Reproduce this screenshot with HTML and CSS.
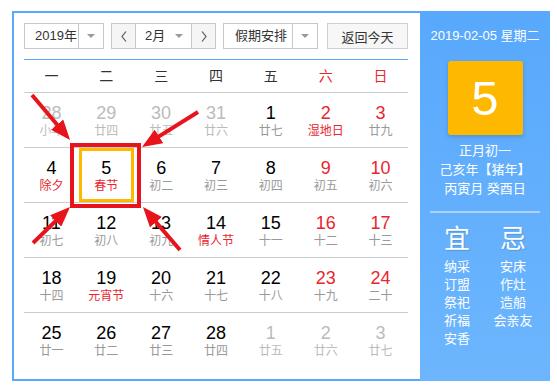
FILE: index.html
```html
<!DOCTYPE html>
<html lang="zh-CN">

<head>
    <meta charset="UTF-8">
    <meta name="viewport" content="width=device-width, initial-scale=1.0">
    <title>万年历</title>
    <link rel="stylesheet" href="styles.css">
</head>

<body>

    <div class="calendar">
        <!-- Left: month grid -->
        <div class="main">
            <div class="toolbar">
                <div class="select year">
                    <span class="select-text">2019年</span>
                    <span class="select-arrow"><i class="caret"></i></span>
                </div>
                <div class="month-group">
                    <span class="nav-btn">
                        <svg width="6" height="11" viewBox="0 0 6 11"><polyline points="5,0.5 1,5.5 5,10.5" fill="none" stroke="#555" stroke-width="1.2"/></svg>
                    </span>
                    <div class="month-select">
                        <span class="select-text">2月</span>
                        <i class="caret"></i>
                    </div>
                    <span class="nav-btn">
                        <svg width="6" height="11" viewBox="0 0 6 11"><polyline points="1,0.5 5,5.5 1,10.5" fill="none" stroke="#555" stroke-width="1.2"/></svg>
                    </span>
                </div>
                <div class="select holiday">
                    <span class="select-text">假期安排</span>
                    <span class="select-arrow"><i class="caret"></i></span>
                </div>
                <button class="today-btn">返回今天</button>
            </div>

            <div class="week-head">
                <span>一</span><span>二</span><span>三</span><span>四</span><span>五</span>
                <span class="red">六</span><span class="red">日</span>
            </div>

            <div class="days">
                <div class="day other"><b>28</b><em>小年</em></div>
                <div class="day other"><b>29</b><em>廿四</em></div>
                <div class="day other"><b>30</b><em>廿五</em></div>
                <div class="day other"><b>31</b><em>廿六</em></div>
                <div class="day"><b>1</b><em>廿七</em></div>
                <div class="day weekend"><b>2</b><em class="fest">湿地日</em></div>
                <div class="day weekend"><b>3</b><em>廿九</em></div>

                <div class="day"><b>4</b><em class="fest">除夕</em></div>
                <div class="day selected"><b>5</b><em class="fest">春节</em></div>
                <div class="day"><b>6</b><em>初二</em></div>
                <div class="day"><b>7</b><em>初三</em></div>
                <div class="day"><b>8</b><em>初四</em></div>
                <div class="day weekend"><b>9</b><em>初五</em></div>
                <div class="day weekend"><b>10</b><em>初六</em></div>

                <div class="day"><b>11</b><em>初七</em></div>
                <div class="day"><b>12</b><em>初八</em></div>
                <div class="day"><b>13</b><em>初九</em></div>
                <div class="day"><b>14</b><em class="fest">情人节</em></div>
                <div class="day"><b>15</b><em>十一</em></div>
                <div class="day weekend"><b>16</b><em>十二</em></div>
                <div class="day weekend"><b>17</b><em>十三</em></div>

                <div class="day"><b>18</b><em>十四</em></div>
                <div class="day"><b>19</b><em class="fest">元宵节</em></div>
                <div class="day"><b>20</b><em>十六</em></div>
                <div class="day"><b>21</b><em>十七</em></div>
                <div class="day"><b>22</b><em>十八</em></div>
                <div class="day weekend"><b>23</b><em>十九</em></div>
                <div class="day weekend"><b>24</b><em>二十</em></div>

                <div class="day"><b>25</b><em>廿一</em></div>
                <div class="day"><b>26</b><em>廿二</em></div>
                <div class="day"><b>27</b><em>廿三</em></div>
                <div class="day"><b>28</b><em>廿四</em></div>
                <div class="day other"><b>1</b><em>廿五</em></div>
                <div class="day other"><b>2</b><em>廿六</em></div>
                <div class="day other"><b>3</b><em>廿七</em></div>
            </div>
        </div>

        <!-- Right: today detail -->
        <div class="side">
            <div class="side-date">2019-02-05 星期二</div>
            <div class="big-day">5</div>
            <div class="lunar">
                <div>正月初一</div>
                <div>己亥年【猪年】</div>
                <div>丙寅月 癸酉日</div>
            </div>
            <div class="side-line"></div>
            <div class="yiji">
                <div class="yiji-col">
                    <div class="yiji-title">宜</div>
                    <div>纳采</div>
                    <div>订盟</div>
                    <div>祭祀</div>
                    <div>祈福</div>
                    <div>安香</div>
                </div>
                <div class="yiji-col">
                    <div class="yiji-title">忌</div>
                    <div>安床</div>
                    <div>作灶</div>
                    <div>造船</div>
                    <div>会亲友</div>
                </div>
            </div>
        </div>
    </div>

    <!-- Red annotation marks over the grid -->
    <svg class="marks" width="557" height="389" viewBox="0 0 557 389">
        <defs>
            <marker id="head" viewBox="0 0 20 16" refX="8" refY="8" markerWidth="20" markerHeight="16"
                orient="auto" markerUnits="userSpaceOnUse">
                <path d="M0,0 L20,8 L0,16 z" fill="#e8141c" />
            </marker>
        </defs>
        <rect x="72" y="145" width="67" height="61" fill="none" stroke="#e8141c" stroke-width="4" />
        <g stroke="#e8141c" stroke-width="4" marker-end="url(#head)">
            <line x1="32" y1="95" x2="62.3" y2="130.8" />
            <line x1="198" y1="112" x2="152.2" y2="140.6" />
            <line x1="33" y1="243" x2="61.4" y2="215.4" />
            <line x1="180" y1="250" x2="150.8" y2="216.1" />
        </g>
    </svg>

</body>

</html>
```

FILE: styles.css
```css
* {
    box-sizing: border-box;
    font-family: "Liberation Sans", "Noto Sans CJK SC", sans-serif;
}

body {
    margin: 0;
    padding: 0;
    background: #fff;
    color: #000;
    position: relative;
}

.calendar {
    margin: 11px 0 0 12px;
    width: 538px;
    height: 370px;
    border: 2px solid #58a8fc;
    border-right: none;
    display: flex;
}

.main {
    width: 406px;
    padding: 10px 12px 0 10px;
}

/* Toolbar */
.toolbar {
    display: flex;
    height: 26px;
    font-size: 13px;
    color: #333;
}

.select {
    display: flex;
    height: 26px;
    border: 1px solid #c8c8c8;
    background: #fff;
}

.select-text {
    flex: 1;
    line-height: 24px;
    padding-left: 10px;
}

.select-arrow {
    width: 25px;
    border-left: 1px solid #c8c8c8;
    display: flex;
    align-items: center;
    justify-content: center;
}

.caret {
    width: 0;
    height: 0;
    border-left: 4px solid transparent;
    border-right: 4px solid transparent;
    border-top: 4px solid #999;
}

.year {
    width: 80px;
}

.month-group {
    display: flex;
    width: 105px;
    height: 26px;
    margin-left: 7px;
    border: 1px solid #c8c8c8;
}

.nav-btn {
    width: 23px;
    background: #f5f5f5;
    display: flex;
    align-items: center;
    justify-content: center;
}

.month-select {
    flex: 1;
    display: flex;
    align-items: center;
    padding-right: 8px;
    border-left: 1px solid #c8c8c8;
    border-right: 1px solid #c8c8c8;
    background: #fff;
}

.month-select .select-text {
    padding-left: 9px;
}

.holiday {
    width: 95px;
    margin-left: 7px;
}

.holiday .select-text {
    padding-left: 11px;
}

.today-btn {
    width: 81px;
    height: 26px;
    margin-left: 9px;
    padding: 0;
    border: 1px solid #cfcfcf;
    background: #f7f7f7;
    font-size: 13px;
    color: #333;
}

/* Week header */
.week-head {
    display: grid;
    grid-template-columns: repeat(7, 1fr);
    margin-top: 10px;
    border-top: 1px solid #58a8fc;
    border-bottom: 1px solid #ccc;
    height: 34px;
    line-height: 33px;
    text-align: center;
    font-size: 14px;
    color: #333;
}

.red {
    color: #e9262d;
}

/* Day grid */
.days {
    display: grid;
    grid-template-columns: repeat(7, 1fr);
}

.day {
    height: 55px;
    border-bottom: 1px solid #ccc;
    padding-top: 10px;
    display: flex;
    flex-direction: column;
    align-items: center;
}

.day:nth-last-child(-n+7) {
    border-bottom: none;
}

.day b {
    font-weight: normal;
    font-size: 18px;
    line-height: 20px;
    color: #000;
}

.day em {
    font-style: normal;
    font-size: 12px;
    line-height: 16px;
    color: #999;
}

.day.weekend b {
    color: #e9262d;
}

.day em.fest {
    color: #e9262d;
}

.day.other b,
.day.other em {
    color: #bbb;
}

.day.selected {
    box-shadow: inset 0 0 0 3px #ffb800;
}

/* Side panel */
.side {
    width: 130px;
    margin-top: -2px;
    margin-bottom: -2px;
    padding-top: 15px;
    background: linear-gradient(#58a8fc, #6db6fe);
    color: #fff;
    text-align: center;
    font-size: 13px;
}

.side-date {
    line-height: 20px;
}

.big-day {
    width: 75px;
    height: 74px;
    margin: 15px auto 0;
    background: #ffb800;
    border-radius: 3px;
    box-shadow: 0 2px 4px rgba(0, 0, 0, 0.15);
    font-size: 49px;
    line-height: 74px;
}

.lunar {
    margin-top: 6px;
    line-height: 19px;
}

.side-line {
    height: 2px;
    margin: 13px 10px 0;
    background: rgba(255, 255, 255, 0.45);
}

.yiji {
    display: flex;
    justify-content: center;
    margin-top: 11px;
}

.yiji-col {
    width: 56px;
    line-height: 18px;
}

.yiji-title {
    font-size: 26px;
    line-height: 30px;
    margin-bottom: 4px;
    text-shadow: 1px 1px 1px rgba(0, 0, 0, 0.15);
}

.marks {
    position: absolute;
    top: 0;
    left: 0;
    pointer-events: none;
}
```
